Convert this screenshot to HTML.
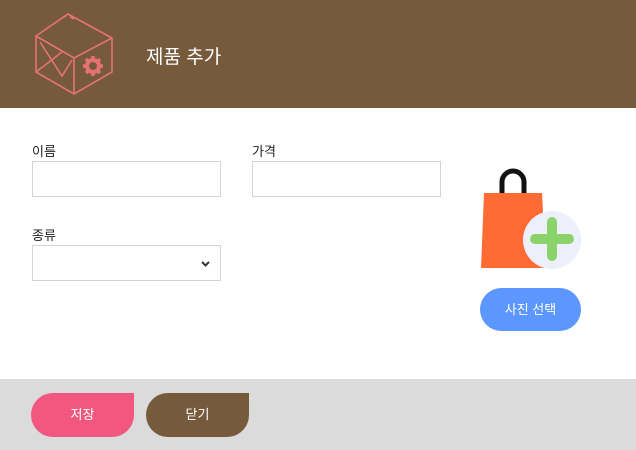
<!DOCTYPE html>
<html><head><meta charset="utf-8"><style>
body{margin:0;width:636px;height:450px;position:relative;font-family:"Liberation Sans","Noto Sans CJK KR",sans-serif;background:#fff;overflow:hidden}
.hd{position:absolute;left:0;top:0;width:636px;height:108px;background:#775a3c}
.t{position:absolute;left:146px;top:42px;color:#fff;font-size:19px}
.l{position:absolute;font-size:13px;color:#222}
.in{position:absolute;border:1px solid #d4d4d4;box-sizing:border-box;background:#fff}
.ft{position:absolute;left:0;top:379px;width:636px;height:71px;background:#dbdbdb}
.b{position:absolute;top:393px;width:103px;height:44px;border-radius:22px 0 22px 22px;color:#fff;font-size:13px;text-align:center;line-height:44px}
</style></head><body>
<div class="hd">
<svg style="position:absolute;left:34px;top:12px" width="82" height="86" viewBox="0 0 82 86" fill="none" stroke="#e57373" stroke-width="1.6">
<path d="M34 2 L78 26 L78 60 L40 82 L2 60 L2 24 Z"/>
<path d="M2 24 L40 46 L78 26"/><path d="M40 46 L40 82"/>
<path d="M6 30 L28 64 L38 48"/><path d="M2 60 L28 40"/>
<path d="M28 6 L32 4 M36 5 L40 7"/>
<g transform="translate(59,54)"><circle r="6" stroke-width="4"/><path d="M0 -10V-6M0 6V10M-10 0H-6M6 0H10M-7 -7L-4.5 -4.5M7 7L4.5 4.5M-7 7L-4.5 4.5M7 -7L4.5 -4.5" stroke-width="3.5"/></g>
</svg>
<div class="t">제품 추가</div>
</div>
<div class="l" style="left:32px;top:141px">이름</div>
<div class="l" style="left:252px;top:141px">가격</div>
<div class="in" style="left:32px;top:161px;width:189px;height:36px"></div>
<div class="in" style="left:252px;top:161px;width:189px;height:36px"></div>
<div class="l" style="left:32px;top:225px">종류</div>
<div class="in" style="left:32px;top:245px;width:189px;height:36px"><svg style="position:absolute;left:168px;top:15px" width="9" height="6" viewBox="0 0 9 6"><path d="M1 1L4.5 4.5L8 1" stroke="#333" stroke-width="2" fill="none"/></svg></div>
<svg style="position:absolute;left:478px;top:168px" width="106" height="104" viewBox="0 0 106 104">
<path d="M24 30V14a11 11 0 0 1 22 0v16" stroke="#111" stroke-width="5" fill="none" stroke-linecap="round"/>
<path d="M6 25H64L68 100H3Z" fill="#ff6b35"/>
<circle cx="74" cy="72" r="29" fill="#edf0fb"/>
<path d="M74 54V88M57 71H91" stroke="#8ad36a" stroke-width="10" stroke-linecap="round"/>
</svg>
<div style="position:absolute;left:480px;top:288px;width:101px;height:43px;border-radius:22px;background:#5c97ff;color:#fff;font-size:13px;text-align:center;line-height:43px">사진 선택</div>
<div class="ft"></div>
<div class="b" style="left:31px;background:#f2587f">저장</div>
<div class="b" style="left:146px;background:#775a3c">닫기</div>
</body></html>
